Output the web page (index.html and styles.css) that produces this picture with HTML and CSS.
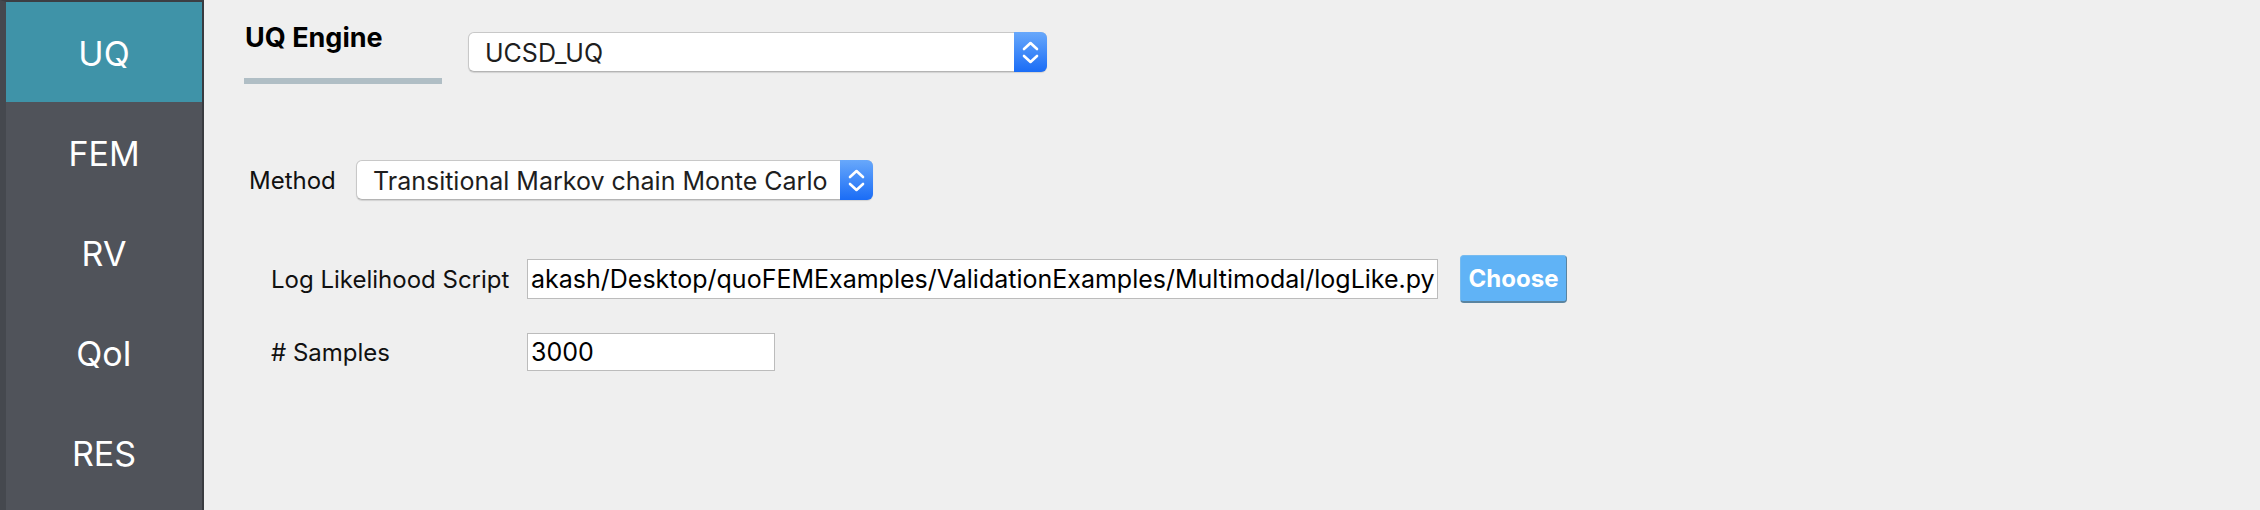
FILE: index.html
```html
<!DOCTYPE html>
<html lang="en">
<head>
<meta charset="utf-8">
<title>quoFEM - UQ</title>
<link rel="stylesheet" href="styles.css">
</head>
<body>
<div class="app">
  <nav class="sidebar">
    <div class="nav-item active">UQ</div>
    <div class="nav-item">FEM</div>
    <div class="nav-item">RV</div>
    <div class="nav-item">QoI</div>
    <div class="nav-item">RES</div>
  </nav>
  <main class="main">
    <div class="engine-row">
      <div class="engine-tab">UQ Engine</div>
      <div class="combo combo-engine">
        <span class="combo-text">UCSD_UQ</span>
        <span class="combo-arrows"><svg viewBox="0 0 33 40" width="33" height="40"><path d="M10 17 L16.5 11 L23 17 M10 24 L16.5 30 L23 24" fill="none" stroke="#fff" stroke-width="2.6" stroke-linecap="round" stroke-linejoin="round"/></svg></span>
      </div>
    </div>
    <div class="method-row">
      <span class="label method-label">Method</span>
      <div class="combo combo-method">
        <span class="combo-text">Transitional Markov chain Monte Carlo</span>
        <span class="combo-arrows"><svg viewBox="0 0 33 40" width="33" height="40"><path d="M10 17 L16.5 11 L23 17 M10 24 L16.5 30 L23 24" fill="none" stroke="#fff" stroke-width="2.6" stroke-linecap="round" stroke-linejoin="round"/></svg></span>
      </div>
    </div>
    <div class="form">
      <span class="label">Log Likelihood Script</span>
      <div class="field field-path">akash/Desktop/quoFEMExamples/ValidationExamples/Multimodal/logLike.py</div>
      <button class="choose">Choose</button>
      <span class="label"># Samples</span>
      <div class="field field-samples">3000</div>
    </div>
  </main>
</div>
</body>
</html>
```
FILE: styles.css
```css
html, body {
  margin: 0;
  padding: 0;
}
body {
  background: #efefef;
  font-family: Inter, "Noto Sans", sans-serif;
  color: #111;
}
.app {
  display: flex;
  height: 510px;
  overflow: hidden;
}
.sidebar {
  flex: none;
  width: 196px;
  background: #50535a;
  border-left: 6px solid #45484e;
  border-top: 2px solid #3c3e43;
  border-right: 2px solid #393b40;
  display: flex;
  flex-direction: column;
}
.nav-item {
  flex: none;
  height: 100px;
  display: flex;
  align-items: center;
  justify-content: center;
  color: #fff;
  font-size: 34px;
  padding-top: 2px;
  box-sizing: border-box;
}
.nav-item.active {
  background: #3f93a8;
}
.main {
  flex: 1;
  padding-left: 40px;
}
.engine-row {
  display: flex;
  align-items: flex-start;
  gap: 26px;
}
.engine-tab {
  width: 197px;
  padding-left: 1px;
  margin-top: 22px;
  padding-bottom: 24px;
  border-bottom: 6px solid #b0bec5;
  font-weight: 700;
  font-size: 27px;
  line-height: 32px;
  color: #000;
}
.combo {
  box-sizing: border-box;
  display: flex;
  align-items: stretch;
  background: #fff;
  border: 1px solid #c8c8c8;
  border-bottom-color: #b4b4b4;
  border-radius: 6px;
  box-shadow: 0 1px 1px rgba(0, 0, 0, 0.12);
}
.combo-engine {
  margin-top: 32px;
  width: 579px;
  height: 40px;
}
.combo-method {
  width: 517px;
  height: 40px;
}
.combo-text {
  flex: 1;
  display: flex;
  align-items: center;
  padding-left: 16px;
  padding-top: 1px;
  font-size: 25px;
  color: #1e1e1e;
  white-space: nowrap;
  overflow: hidden;
}
.combo-arrows {
  flex: none;
  width: 33px;
  margin: -1px -1px -1px 0;
  border-radius: 0 6px 6px 0;
  background: linear-gradient(#68a8fb, #1a6cf6);
  display: flex;
  align-items: center;
  justify-content: center;
}
.combo-arrows svg {
  display: block;
}
.method-row {
  display: flex;
  align-items: center;
  margin-top: 76px;
  padding-left: 5px;
}
.label {
  font-size: 24px;
  color: #111;
  white-space: nowrap;
}
.method-label {
  width: 107px;
}
.form {
  margin-top: 55px;
  padding-left: 27px;
  display: grid;
  grid-template-columns: 234px 911px 107px;
  grid-template-rows: 48px 38px;
  column-gap: 22px;
  row-gap: 30px;
  align-items: center;
}
.field {
  box-sizing: border-box;
  background: #fff;
  border: 1px solid #bcbcbc;
  padding: 0 3px;
  font-size: 25px;
  color: #000;
  display: flex;
  align-items: center;
  white-space: nowrap;
  overflow: hidden;
}
.field-path {
  height: 40px;
}
.field-samples {
  width: 248px;
  height: 38px;
}
.choose {
  box-sizing: border-box;
  width: 107px;
  height: 48px;
  padding: 0;
  background: #60b3f6;
  border: 1px solid #76bbf0;
  border-right-color: #5a84a0;
  border-bottom: 2px solid #5a84a0;
  border-radius: 4px;
  color: #fff;
  font-family: Inter, "Noto Sans", sans-serif;
  font-weight: 700;
  font-size: 24px;
}
```
